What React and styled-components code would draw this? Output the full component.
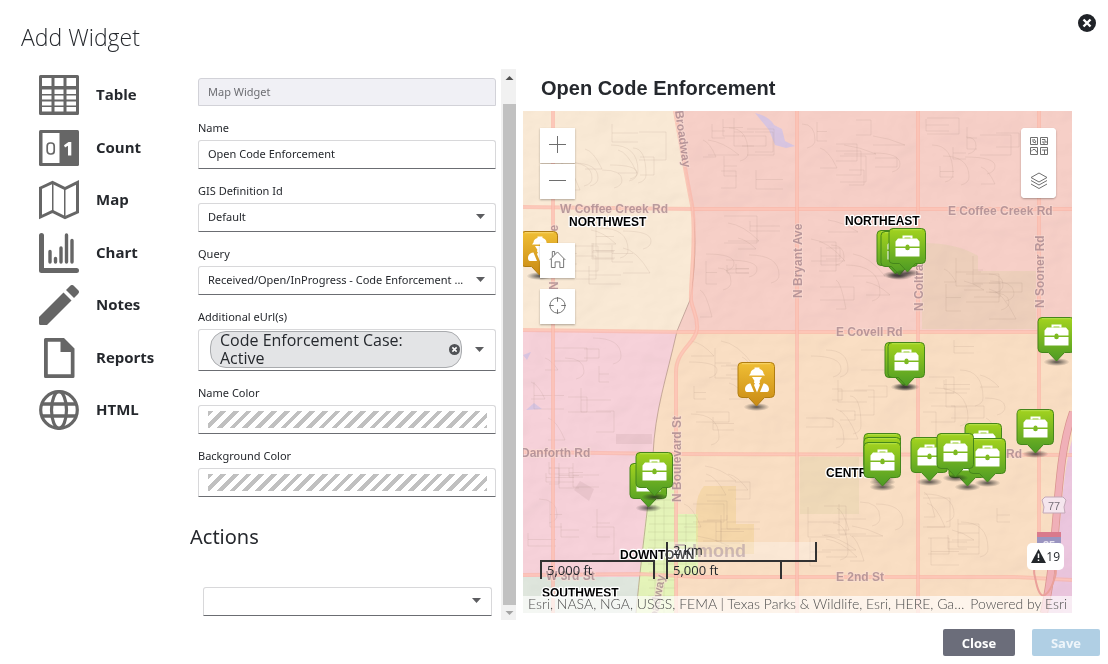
import React from "react";
import styled, { createGlobalStyle, css } from "styled-components";

const GlobalStyle = createGlobalStyle`
  *,
  *::before,
  *::after {
    box-sizing: border-box;
  }

  body {
    margin: 0;
    background: #fff;
    color: #25282d;
    font-family: "Noto Sans", "Open Sans", sans-serif;
    font-size: 12px;
  }

  button,
  input,
  select {
    font: inherit;
    color: inherit;
  }
`;

const Dialog = styled.div`
  display: flex;
  flex-direction: column;
  min-height: 100vh;
`;

const DialogHeader = styled.header`
  display: flex;
  justify-content: space-between;
  align-items: flex-start;
  height: 69px;
  padding: 14px 12px 0 21px;

  h1 {
    margin: 8px 0 0;
    font-family: "Open Sans", sans-serif;
    font-size: 23px;
    font-weight: 300;
    line-height: 30px;
  }
`;

const DismissButton = styled.button`
  display: block;
  width: 18px;
  height: 18px;
  padding: 0;
  border: 0;
  background: none;
  cursor: pointer;

  svg {
    display: block;
  }
`;

const DialogBody = styled.div`
  flex: 1;
  display: grid;
  grid-template-columns: 190px 326px minmax(0, 1fr);
`;

const WidgetList = styled.ul`
  display: flex;
  flex-direction: column;
  justify-content: space-between;
  height: 355px;
  margin: 6px 0 0;
  padding: 0 0 0 39px;
  list-style: none;
`;

const WidgetLink = styled.a`
  display: flex;
  align-items: center;
  gap: 17px;
  color: inherit;
  font-family: "Open Sans", sans-serif;
  font-size: 15px;
  font-weight: 700;
  line-height: 24px;
  text-decoration: none;

  span {
    padding-bottom: 2px;
  }

  svg {
    display: block;
    width: 40px;
    height: 40px;
    fill: #666;
  }
`;

const FormPanel = styled.div`
  display: flex;
`;

const Form = styled.form`
  flex: 1;
  padding: 9px 5px 4px 8px;
`;

const Field = styled.div`
  display: flex;
  flex-direction: column;
  margin-top: 14px;

  label {
    margin-bottom: 4px;
    font-size: 11px;
    line-height: 16px;
  }
`;

const control = css`
  width: 100%;
  height: 29px;
  padding: 0 9px 2px;
  border: 1px solid #d8d8da;
  border-bottom-color: #6b6d72;
  border-radius: 3px 3px 0 0;
  background: #fff;
  font-size: 11px;
`;

const TextInput = styled.input`
  ${control}
  display: block;

  &:disabled {
    height: 28px;
    border-color: #d2d2d8;
    background: #f0f0f5;
    color: #6d6e73;
  }
`;

const SelectBox = styled.div`
  position: relative;

  select {
    ${control}
    display: block;
    padding-right: 24px;
    appearance: none;
    text-overflow: ellipsis;
  }

  svg {
    position: absolute;
    top: 11px;
    right: 11px;
    pointer-events: none;
  }
`;

const ChipBox = styled.div`
  ${control}
  display: flex;
  align-items: center;
  justify-content: space-between;
  height: 42px;
  padding: 0 11px 1px;
`;

const Chip = styled.span`
  display: flex;
  align-items: center;
  justify-content: space-between;
  width: 252px;
  height: 37px;
  padding: 0 1px 0 9px;
  border: 1px solid #a9abae;
  border-radius: 16px;
  background: #e3e4e6;
  font-family: "Open Sans", sans-serif;
  font-size: 16px;
  line-height: 18px;

  span {
    width: 200px;
    padding-bottom: 1px;
  }
`;

const IconButton = styled.button`
  display: block;
  padding: 0;
  border: 0;
  background: none;
  cursor: pointer;

  svg {
    display: block;
  }
`;

const ColorButton = styled.button`
  ${control}
  padding: 5px 8px 5px 9px;
  cursor: pointer;

  &::before {
    content: "";
    display: block;
    height: 17px;
    background: repeating-linear-gradient(
      135deg,
      #c0c0c0 0 4px,
      #fff 4px 9px
    );
  }
`;

const ActionsTitle = styled.h2`
  margin: 26px 0 36px -8px;
  font-size: 20px;
  font-weight: 400;
  line-height: 28px;
`;

const ActionSelect = styled(SelectBox)`
  margin: 0 4px 0 5px;
`;

const ScrollTrack = styled.div`
  display: flex;
  flex-direction: column;
  width: 15px;
  background: #f1f1f1;

  svg {
    display: block;
  }
`;

const ScrollThumb = styled.div`
  flex: 1;
  margin: 18px 0 0 2px;
  background: #c1c1c1;
`;

const Preview = styled.section`
  display: flex;
  flex-direction: column;
  padding: 0 36px 7px 7px;

  h2 {
    margin: 0;
    padding: 5px 0 9px 18px;
    font-family: "Liberation Sans", Arial, sans-serif;
    font-size: 20px;
    font-weight: 700;
    line-height: 28px;
  }
`;

const MapView = styled.div`
  position: relative;
  flex: 1;
  overflow: hidden;
  background: #f8dcbe;
`;

const MapCanvas = styled.svg`
  position: absolute;
  width: 100%;
  height: 100%;
  font-family: "Liberation Sans", Arial, sans-serif;
  font-weight: 700;
`;

const MapTools = styled.div`
  position: absolute;
  top: 17px;
  left: 17px;
  display: flex;
  flex-direction: column;
`;

const MapButton = styled.button`
  display: flex;
  align-items: center;
  justify-content: center;
  width: 35px;
  height: 35px;
  margin-top: ${(props) => props.$space || 0}px;
  padding: 0 0 2px;
  border: 0;
  background: #fff;
  box-shadow: ${(props) =>
    props.$flat ? "none" : "0 1px 2px rgba(0, 0, 0, 0.3)"};
  cursor: pointer;

  svg {
    fill: none;
    stroke: #6e6e6e;
  }
`;

const MapPanel = styled.div`
  position: absolute;
  top: 17px;
  right: 16px;
  overflow: hidden;
  border-radius: 4px;
  background: #fff;
  box-shadow: 0 1px 2px rgba(0, 0, 0, 0.3);

  ${MapButton} {
    padding: 0;
  }
`;

const AlertBadge = styled.button`
  position: absolute;
  right: 8px;
  bottom: 43px;
  display: flex;
  align-items: center;
  height: 27px;
  padding: 0 4px 1px;
  border: 0;
  border-radius: 5px;
  background: #fff;
  font-family: "Open Sans", sans-serif;
  font-size: 12px;
`;

const ScaleBars = styled.div`
  position: absolute;
  bottom: 34px;
  left: 17px;
  display: flex;
  align-items: flex-end;
  gap: 11px;
  font-size: 12px;
  line-height: 17px;
`;

const ScaleBar = styled.div`
  width: ${(props) => props.$width}px;
  height: ${(props) => (props.$metric ? 20 : 19)}px;
  padding-left: 5px;
  border: solid #323232;
  border-width: ${(props) => (props.$metric ? "0 2px 2px" : "2px 2px 0")};
  background: ${(props) =>
    props.$metric ? "rgba(255, 255, 255, 0.3)" : "none"};
  font-family: "Open Sans", sans-serif;
  font-size: 13px;

  & + & {
    height: 17px;
    border-top: 0;
  }
`;

const Attribution = styled.div`
  position: absolute;
  right: 0;
  bottom: 0;
  left: 0;
  display: flex;
  justify-content: space-between;
  gap: 4px;
  padding: 0 5px 1px;
  background: rgba(255, 255, 255, 0.66);
  color: #4c4c4c;
  font-family: Lato, sans-serif;
  font-size: 14px;
  font-weight: 300;
  line-height: 16px;
  white-space: nowrap;

  span:first-child {
    overflow: hidden;
    text-overflow: ellipsis;
  }
`;

const DialogFooter = styled.footer`
  display: flex;
  justify-content: flex-end;
  gap: 17px;
  padding: 9px 8px 8px;
`;

const FooterButton = styled.button`
  width: ${(props) => (props.disabled ? 68 : 72)}px;
  height: 27px;
  padding: 0;
  border: 0;
  border-radius: 2px;
  background: ${(props) => (props.disabled ? "#b0cfe4" : "#6b6d7a")};
  color: ${(props) => (props.disabled ? "#eef5fa" : "#fff")};
  font-family: "Open Sans", sans-serif;
  font-size: 13px;
  font-weight: 700;
`;

const Caret = () => (
  <svg width="9" height="6" viewBox="0 0 9 6">
    <path d="M0 0h9L4.500 5z" fill="#5c5d60" />
  </svg>
);

const CloseIcon = ({ size, color }) => (
  <svg width={size} height={size} viewBox="0 0 18 18">
    <circle cx="9" cy="9" r="9" fill={color} />
    <path d="M5.500 5.500l7 7M12.500 5.500l-7 7" stroke="#fff" strokeWidth="2.400" />
  </svg>
);

const widgets = [
  {
    name: "Table",
    icon: (
      <path
        fillRule="evenodd"
        d="M1.500 0h37A1.500 1.500 0 0 1 40 1.500v37a1.500 1.500 0 0 1-1.500 1.500h-37A1.500 1.500 0 0 1 0 38.500v-37A1.500 1.500 0 0 1 1.500 0zM3 3v8h9.500V3zM15.500 3v8h9V3zM27.500 3v8h9.500V3zM3 14.500v4.500h9.500v-4.500zM15.500 14.500v4.500h9v-4.500zM27.500 14.500v4.500h9.500v-4.500zM3 20.500v4h9.500v-4zM15.500 20.500v4h9v-4zM27.500 20.500v4h9.500v-4zM3 26.500v4h9.500v-4zM15.500 26.500v4h9v-4zM27.500 26.500v4h9.500v-4zM3 32v4.500h9.500V32zM15.500 32v4.500h9V32zM27.500 32v4.500h9.500V32z"
      />
    ),
  },
  {
    name: "Count",
    icon: (
      <>
        <rect y="2" width="40" height="36" rx="1.500" />
        <path d="M3.500 5h17v30h-17z" fill="#fff" />
        <rect
          x="8.200"
          y="15"
          width="7"
          height="11"
          rx="3"
          fill="none"
          stroke="#666"
          strokeWidth="1.700"
        />
        <path d="M29.500 14h2.800v13.500h-3.300v-9.700l-3 1.600-1-2.200z" fill="#fff" />
      </>
    ),
  },
  {
    name: "Map",
    icon: (
      <>
        <path
          d="M1.500 8L13.500 2.500 26 8.500 38.500 2.500V32L26 37.500 13.500 31.500 1.500 37z"
          fill="none"
          stroke="#666"
          strokeWidth="3"
        />
        <path d="M13 3h1.500v28H13zM25 8h1.500v29H25z" />
      </>
    ),
  },
  {
    name: "Chart",
    icon: (
      <g stroke="#666" strokeLinecap="round" fill="none">
        <path d="M2.500 2.500v35h35" strokeWidth="5" strokeLinejoin="round" />
        <path
          d="M11 18.500v10.500M16.500 25.500V29M22 15v14M27.500 2v27M33 7.500V29"
          strokeWidth="3.400"
        />
      </g>
    ),
  },
  {
    name: "Notes",
    icon: (
      <path d="M0 32L24.500 7.500l8 8L8 40H1.500A1.500 1.500 0 0 1 0 38.500zM27 5l4-4a2.800 2.800 0 0 1 4 0l4 4a2.800 2.800 0 0 1 0 4l-4 4z" />
    ),
  },
  {
    name: "Reports",
    icon: (
      <path
        fillRule="evenodd"
        d="M6.500 0H25l10.500 10.500v28A1.500 1.500 0 0 1 34 40H6.500A1.500 1.500 0 0 1 5 38.500v-37A1.500 1.500 0 0 1 6.500 0zM8.800 3.800v32.400h23V14H21.500V3.800z"
      />
    ),
  },
  {
    name: "HTML",
    icon: (
      <g fill="none" stroke="#666" strokeWidth="3.200">
        <circle cx="20" cy="20" r="18.300" />
        <ellipse cx="20" cy="20" rx="7.500" ry="18.300" />
        <path d="M3 14h34M3 26h34" strokeWidth="3.600" />
      </g>
    ),
  },
];

// small repeatable generator so the side streets stay put between renders
const makeRandom = (seed) => () => {
  seed = (seed * 16807) % 2147483647;
  return seed / 2147483647;
};

const sections = [
  [558, 115, 120, 88],
  [558, 215, 120, 110],
  [700, 115, 92, 90],
  [700, 215, 92, 110],
  [801, 115, 113, 90],
  [801, 215, 113, 110],
  [922, 115, 113, 90],
  [935, 255, 100, 70],
  [526, 335, 125, 115],
  [526, 460, 110, 110],
  [682, 336, 112, 115],
  [682, 460, 112, 112],
  [801, 336, 113, 115],
  [801, 500, 113, 72],
  [922, 336, 113, 115],
  [922, 490, 113, 82],
];

const buildStreets = () => {
  const random = makeRandom(4127);
  return sections
    .map(([x, y, w, h]) => {
      let d = "";
      for (let i = 0; i < 12; i++) {
        const sx = x + Math.round(random() * (w - 36));
        const sy = y + Math.round(random() * (h - 32));
        const a = 10 + Math.round(random() * 24);
        const b = 8 + Math.round(random() * 22);
        const kind = Math.floor(random() * 4);
        if (kind === 0) d += `M${sx} ${sy}h${a}v${b}h-${a}`;
        if (kind === 1) d += `M${sx} ${sy}v${b}h${a}M${sx} ${sy + b / 2}h${a}`;
        if (kind === 2) d += `M${sx} ${sy}q${a / 2} 2 ${a} ${b}M${sx} ${sy + b}h${a}`;
        if (kind === 3) d += `M${sx} ${sy}q${a} 0 ${a} ${b}q0 6 -8 8`;
      }
      return d;
    })
    .join("");
};

const streets = buildStreets();

const townGrid = Array.from(
  { length: 13 },
  (_, i) => `M${648 + (i % 2)} ${500 + i * 8}h${i < 2 || i > 9 ? 27 : 48}`
).join("");

const roads = [
  "M523 207L693 209H1072",
  "M523 330L680 332H1072",
  "M523 452L680 454L1072 455",
  "M523 575L640 574L700 577H1015L1072 580",
  "M553 111V613",
  "M797 111V613",
  "M918 111V613",
  "M1039 111V540",
  "M675 111C682 150 685 170 692 205C697 240 690 280 691 300C693 312 698 316 697 329C696 343 676 350 676 372V613",
];

const streetLabels = [
  { text: "W Coffee Creek Rd", x: 560, y: 213 },
  { text: "E Coffee Creek Rd", x: 948, y: 215 },
  { text: "E Covell Rd", x: 836, y: 336 },
  { text: "Danforth Rd", x: 521, y: 457 },
  { text: "Rd", x: 1006, y: 458 },
  { text: "E 2nd St", x: 836, y: 581 },
  { text: "W 3rd St", x: 546, y: 580 },
  { text: "N Bryant Ave", x: 802, y: 298, turn: -90 },
  { text: "N Coltrane Rd", x: 923, y: 311, turn: -90 },
  { text: "N Sooner Rd", x: 1044, y: 308, turn: -90 },
  { text: "N Boulevard St", x: 681, y: 502, turn: -90 },
  { text: "Broadway", x: 675, y: 111, turn: 82 },
  { text: "N Kelly Ave", x: 558, y: 290, turn: -90 },
  { text: "Broadway", x: 655, y: 632, turn: -80 },
];

const districts = [
  { name: "NORTHWEST", x: 569, y: 226 },
  { name: "NORTHEAST", x: 845, y: 225 },
  { name: "CENTRAL", x: 826, y: 477 },
  { name: "DOWNTOWN", x: 620, y: 559 },
  { name: "SOUTHWEST", x: 542, y: 597 },
];

// x and y are the top left corner of the pin head
const pins = [
  { x: 521, y: 231, kind: "worker" },
  { x: 738, y: 362, kind: "worker" },
  { x: 877, y: 230 },
  { x: 881, y: 231 },
  { x: 889, y: 228 },
  { x: 1038, y: 317 },
  { x: 885, y: 342 },
  { x: 888, y: 342 },
  { x: 1017, y: 409 },
  { x: 630, y: 463 },
  { x: 636, y: 452 },
  { x: 864, y: 433 },
  { x: 864, y: 437 },
  { x: 864, y: 442 },
  { x: 911, y: 437 },
  { x: 965, y: 423 },
  { x: 949, y: 442 },
  { x: 969, y: 438 },
  { x: 937, y: 433 },
];

const Pin = ({ x, y, kind }) => {
  const worker = kind === "worker";
  return (
    <g transform={`translate(${x} ${y})`}>
      <ellipse cx="18.500" cy="45" rx="13" ry="4" fill="url(#pinShadow)" />
      <path
        d="M4 .5h28.500a4 4 0 0 1 4 4v27a4 4 0 0 1-4 4h-6L18.500 44l-8-8.500H4a4 4 0 0 1-4-4v-27a4 4 0 0 1 4-4z"
        fill={worker ? "url(#pinAmber)" : "url(#pinGreen)"}
        stroke={worker ? "#b07d12" : "#45861b"}
      />
      <path
        d="M4 1.700h28.500"
        stroke={worker ? "#f7d66e" : "#b6e04a"}
        strokeWidth="1"
      />
      {worker ? (
        <g fill="#fff">
          <path d="M12.500 11.500c0-2.500 2-4 4-4.500V5.500h5V7c2 .5 4 2 4 4.500l1.500 2H11z" />
          <path d="M14 15h10l-2.500 4c1 1 .5 2-.5 2.500l1 1.500-3 7.500-3-7.500 1-1.500c-1-.5-1.500-1.500-.5-2.500z" />
          <path d="M7 27c0-3 2.500-5.500 5.500-5.500l3.500 8.500H9c-1.500 0-2-1.500-2-3zM31 27c0-3-2.500-5.500-5.500-5.500L22 30h7c1.500 0 2-1.500 2-3z" />
        </g>
      ) : (
        <g fill="#fff">
          <path
            d="M14.500 10.500V8.500h8v2"
            fill="none"
            stroke="#fff"
            strokeWidth="2"
          />
          <path d="M9 10.500h19l2.500 3v5H20.500a2 2 0 0 0-4 0H6.500v-5z" />
          <path d="M6.500 20h9.700a2.200 2.200 0 0 0 4.600 0h9.700v8.500h-24z" />
        </g>
      )}
    </g>
  );
};

const MapDrawing = () => (
  <MapCanvas viewBox="523 111 549 502" preserveAspectRatio="xMinYMin slice">
    <defs>
      <linearGradient id="pinGreen" x2="0" y2="1">
        <stop offset="0" stopColor="#a3d31f" />
        <stop offset="1" stopColor="#4c9a24" />
      </linearGradient>
      <linearGradient id="pinAmber" x2="0" y2="1">
        <stop offset="0" stopColor="#f0bf35" />
        <stop offset="1" stopColor="#c98a14" />
      </linearGradient>
      <radialGradient id="pinShadow">
        <stop offset="0" stopColor="#222" stopOpacity=".75" />
        <stop offset="1" stopColor="#222" stopOpacity="0" />
      </radialGradient>
      <filter id="relief" x="0" y="0" width="100%" height="100%">
        <feTurbulence
          type="fractalNoise"
          baseFrequency=".022 .03"
          numOctaves="3"
          seed="8"
        />
        <feDiffuseLighting surfaceScale="5" lightingColor="#fff">
          <feDistantLight azimuth="225" elevation="60" />
        </feDiffuseLighting>
      </filter>
    </defs>

    <path d="M523 111h170v220H523z" fill="#faead6" />
    <path
      d="M675 111C682 150 685 170 692 205C697 240 695 270 690 300L677 331H1072V111z"
      fill="#f7d0c8"
    />
    <path
      d="M523 331H677C666 380 655 410 653 455C648 510 643 540 640 577H523z"
      fill="#f7d2da"
    />
    <path
      d="M677 331C666 380 655 410 653 455C648 510 643 540 640 577V613H1072V331z"
      fill="#fadfc4"
    />
    <path d="M523 577h117l-4 36H523z" fill="#e0e7de" />
    <path
      d="M653 455h23v59h22v63h-22v36h-40C640 560 647 510 653 455z"
      fill="#e6f5ba"
    />
    <path
      d="M1072 440C1060 480 1062 540 1048 613H1072z"
      fill="#ecc7df"
    />
    <path
      d="M922 243q35 0 56 13v15h58v58H922zM800 457h59v57h-59z"
      fill="#ddd0a6"
      opacity=".35"
    />
    <path
      d="M704 486h32v38h18v30h-58v-40q0-20 8-28z"
      fill="#f0cd86"
      opacity=".4"
    />
    <path
      d="M755 113q14 3 19 12l8 4 3 12 10 5-9 2-11-3-6-15zM526 410l8-7 8 6zM523 355l8-3-4 8z"
      fill="#d9c6e2"
    />
    <path
      d="M616 434h36v10h-36zM574 490l6-9 14 8-5 12z"
      fill="#b98e94"
      opacity=".18"
    />
    <rect
      x="523"
      y="111"
      width="549"
      height="502"
      filter="url(#relief)"
      opacity=".13"
      style={{ mixBlendMode: "multiply" }}
    />

    <path
      d={streets}
      fill="none"
      stroke="#9c7e74"
      strokeOpacity=".18"
      strokeWidth=".8"
    />
    <path
      d={`${townGrid}M655 500v113M664 500v113M686 514v63`}
      fill="none"
      stroke="#8d9468"
      strokeOpacity=".18"
      strokeWidth=".8"
    />
    <path
      d="M677 331C666 380 655 410 653 455C648 510 643 540 636 613M675 111C682 150 685 170 692 205C697 240 695 270 690 300L677 331"
      fill="none"
      stroke="#a3837c"
      strokeOpacity=".6"
    />
    {roads.map((d) => (
      <g key={d} fill="none">
        <path d={d} stroke="#fab3a5" strokeOpacity=".65" strokeWidth="4" />
        <path d={d} stroke="#fdc9bd" strokeOpacity=".7" strokeWidth="1.500" />
      </g>
    ))}
    <path
      d="M1073 412C1054 465 1060 540 1044 613"
      fill="none"
      stroke="#d8938e"
      strokeWidth="8"
    />
    <path
      d="M1073 412C1054 465 1060 540 1044 613"
      fill="none"
      stroke="#f0b0b8"
      strokeWidth="6.500"
    />
    <path
      d="M1035 577q-4-14 10-14t10 14-10 18-10-18"
      fill="none"
      stroke="#eaa09a"
      strokeWidth="2"
    />

    <path
      d="M1045 497h18l3 3-2 7 1 6h-22l1-6-2-7z"
      fill="#f5e6ee"
      stroke="#c3a8b8"
    />
    <text x="1048" y="510" fontSize="11" fontWeight="400" fill="#77707a">
      77
    </text>
    <path d="M1037 532h24v5h-24z" fill="#d97a8c" />
    <path d="M1037 537h24v14h-24z" fill="#9a94c0" />
    <text x="1043" y="549" fontSize="11" fill="#e8e4f0">
      35
    </text>

    <g fontSize="12" fill="#957480" fillOpacity=".65">
      {streetLabels.map(({ text, x, y, turn = 0 }) => (
        <text
          key={text + x}
          transform={`translate(${x} ${y}) rotate(${turn})`}
          stroke="#fbe0d6"
          strokeOpacity=".5"
          strokeWidth="2"
          paintOrder="stroke"
        >
          {text}
        </text>
      ))}
      <text x="674" y="557" fontSize="18">
        Edmond
      </text>
    </g>
    <g
      fontSize="12"
      fill="#000"
      stroke="#fff"
      strokeWidth="2.500"
      strokeLinejoin="round"
      paintOrder="stroke"
    >
      {districts.map(({ name, x, y }) => (
        <text key={name} x={x} y={y}>
          {name}
        </text>
      ))}
    </g>
    {pins.map((pin) => (
      <Pin key={`${pin.x}-${pin.y}`} {...pin} />
    ))}
  </MapCanvas>
);

const MapPreview = () => (
  <MapView>
    <MapDrawing />
    <MapTools>
      <MapButton aria-label="Zoom in">
        <svg width="17" height="17" viewBox="0 0 17 17">
          <path d="M8.500 0v17M0 8.500h17" />
        </svg>
      </MapButton>
      <MapButton aria-label="Zoom out" $space={1}>
        <svg width="17" height="17" viewBox="0 0 17 17">
          <path d="M0 8.500h17" />
        </svg>
      </MapButton>
      <MapButton aria-label="Default view" $space={44}>
        <svg width="17" height="19" viewBox="0 0 18 20">
          <path d="M.7 10.500L9 2l8.300 8.500M3.500 7.500V1.500H6v3.500M2.500 9v9.500h4v-6h5v6h4V9" />
        </svg>
      </MapButton>
      <MapButton aria-label="Find my location" $space={11}>
        <svg width="17" height="17" viewBox="0 0 18 18">
          <circle cx="9" cy="9" r="8" />
          <path d="M9 0v5M9 13v5M0 9h5M13 9h5" />
        </svg>
      </MapButton>
    </MapTools>
    <MapPanel>
      <MapButton aria-label="Basemap gallery" $flat>
        <svg width="18" height="18" viewBox="0 0 18 18">
          <path d="M.5.5h7v7h-7zM10.500.5h7v7h-7zM.5 10.500h7v7h-7zM10.500 10.500h7v7h-7z" />
          <path d="M3 2v3l3 1M4 2l2 3M12 2.500h3v2.500h2M13 4v2h2M1 14.500l2-2h2l2 3M12 13h5M14.500 13v4" />
        </svg>
      </MapButton>
      <MapButton aria-label="Layers" $flat>
        <svg width="18" height="18" viewBox="0 0 18 18">
          <path d="M9 1l8 4.500-8 4.500-8-4.500zM1 8.500L9 13l8-4.500M1 12l8 4.500 8-4.500" />
        </svg>
      </MapButton>
    </MapPanel>
    <ScaleBars>
      <ScaleBar $width={115}>5,000 ft</ScaleBar>
      <div>
        <ScaleBar $width={151} $metric>
          2 km
        </ScaleBar>
        <ScaleBar $width={116}>5,000 ft</ScaleBar>
      </div>
    </ScaleBars>
    <AlertBadge aria-label="19 alerts">
      <svg width="15" height="14" viewBox="0 0 15 14">
        <path d="M7.500 0L15 14H0z" fill="#23272b" />
        <path d="M7.500 4.500v4.500M7.500 10.500v1.500" stroke="#fff" strokeWidth="1.500" />
      </svg>
      19
    </AlertBadge>
    <Attribution>
      <span>
        Esri, NASA, NGA, USGS, FEMA | Texas Parks &amp; Wildlife, Esri, HERE,
        Gar…
      </span>
      <span>Powered by Esri</span>
    </Attribution>
  </MapView>
);

const SelectField = ({ id, label, value }) => (
  <Field>
    <label htmlFor={id}>{label}</label>
    <SelectBox>
      <select id={id} defaultValue={value}>
        <option>{value}</option>
      </select>
      <Caret />
    </SelectBox>
  </Field>
);

const ColorField = ({ id, label }) => (
  <Field>
    <label htmlFor={id}>{label}</label>
    <ColorButton type="button" id={id} />
  </Field>
);

const WidgetForm = () => {
  const [name, setName] = React.useState("Open Code Enforcement");

  return (
    <Form>
      <TextInput aria-label="Widget type" value="Map Widget" disabled />
      <Field>
        <label htmlFor="name">Name</label>
        <TextInput
          id="name"
          value={name}
          onChange={(e) => setName(e.target.value)}
        />
      </Field>
      <SelectField id="gis" label="GIS Definition Id" value="Default" />
      <SelectField
        id="query"
        label="Query"
        value="Received/Open/InProgress - Code Enforcement ..."
      />
      <Field>
        <label htmlFor="eurls">Additional eUrl(s)</label>
        <ChipBox>
          <Chip>
            <span>Code Enforcement Case: Active</span>
            <IconButton type="button" aria-label="Remove">
              <CloseIcon size={11} color="#505256" />
            </IconButton>
          </Chip>
          <IconButton type="button" id="eurls">
            <Caret />
          </IconButton>
        </ChipBox>
      </Field>
      <ColorField id="nameColor" label="Name Color" />
      <ColorField id="backgroundColor" label="Background Color" />
      <ActionsTitle>Actions</ActionsTitle>
      <ActionSelect>
        <select aria-label="Actions" />
        <Caret />
      </ActionSelect>
    </Form>
  );
};

export default () => (
  <>
    <GlobalStyle />
    <Dialog>
      <DialogHeader>
        <h1>Add Widget</h1>
        <DismissButton aria-label="Dismiss">
          <CloseIcon size={18} color="#202328" />
        </DismissButton>
      </DialogHeader>
      <DialogBody>
        <WidgetList>
          {widgets.map(({ name, icon }) => (
            <li key={name}>
              <WidgetLink href={`#${name.toLowerCase()}`}>
                <svg viewBox="0 0 40 40">{icon}</svg>
                <span>{name}</span>
              </WidgetLink>
            </li>
          ))}
        </WidgetList>
        <FormPanel>
          <WidgetForm />
          <ScrollTrack>
            <svg width="15" height="17" viewBox="0 0 15 17">
              <path d="M4.500 11h8L8.500 7z" fill="#505050" />
            </svg>
            <ScrollThumb />
            <svg width="15" height="15" viewBox="0 0 15 15">
              <path d="M4.500 6h8l-4 4z" fill="#a3a3a3" />
            </svg>
          </ScrollTrack>
        </FormPanel>
        <Preview>
          <h2>Open Code Enforcement</h2>
          <MapPreview />
        </Preview>
      </DialogBody>
      <DialogFooter>
        <FooterButton>Close</FooterButton>
        <FooterButton disabled>Save</FooterButton>
      </DialogFooter>
    </Dialog>
  </>
);
